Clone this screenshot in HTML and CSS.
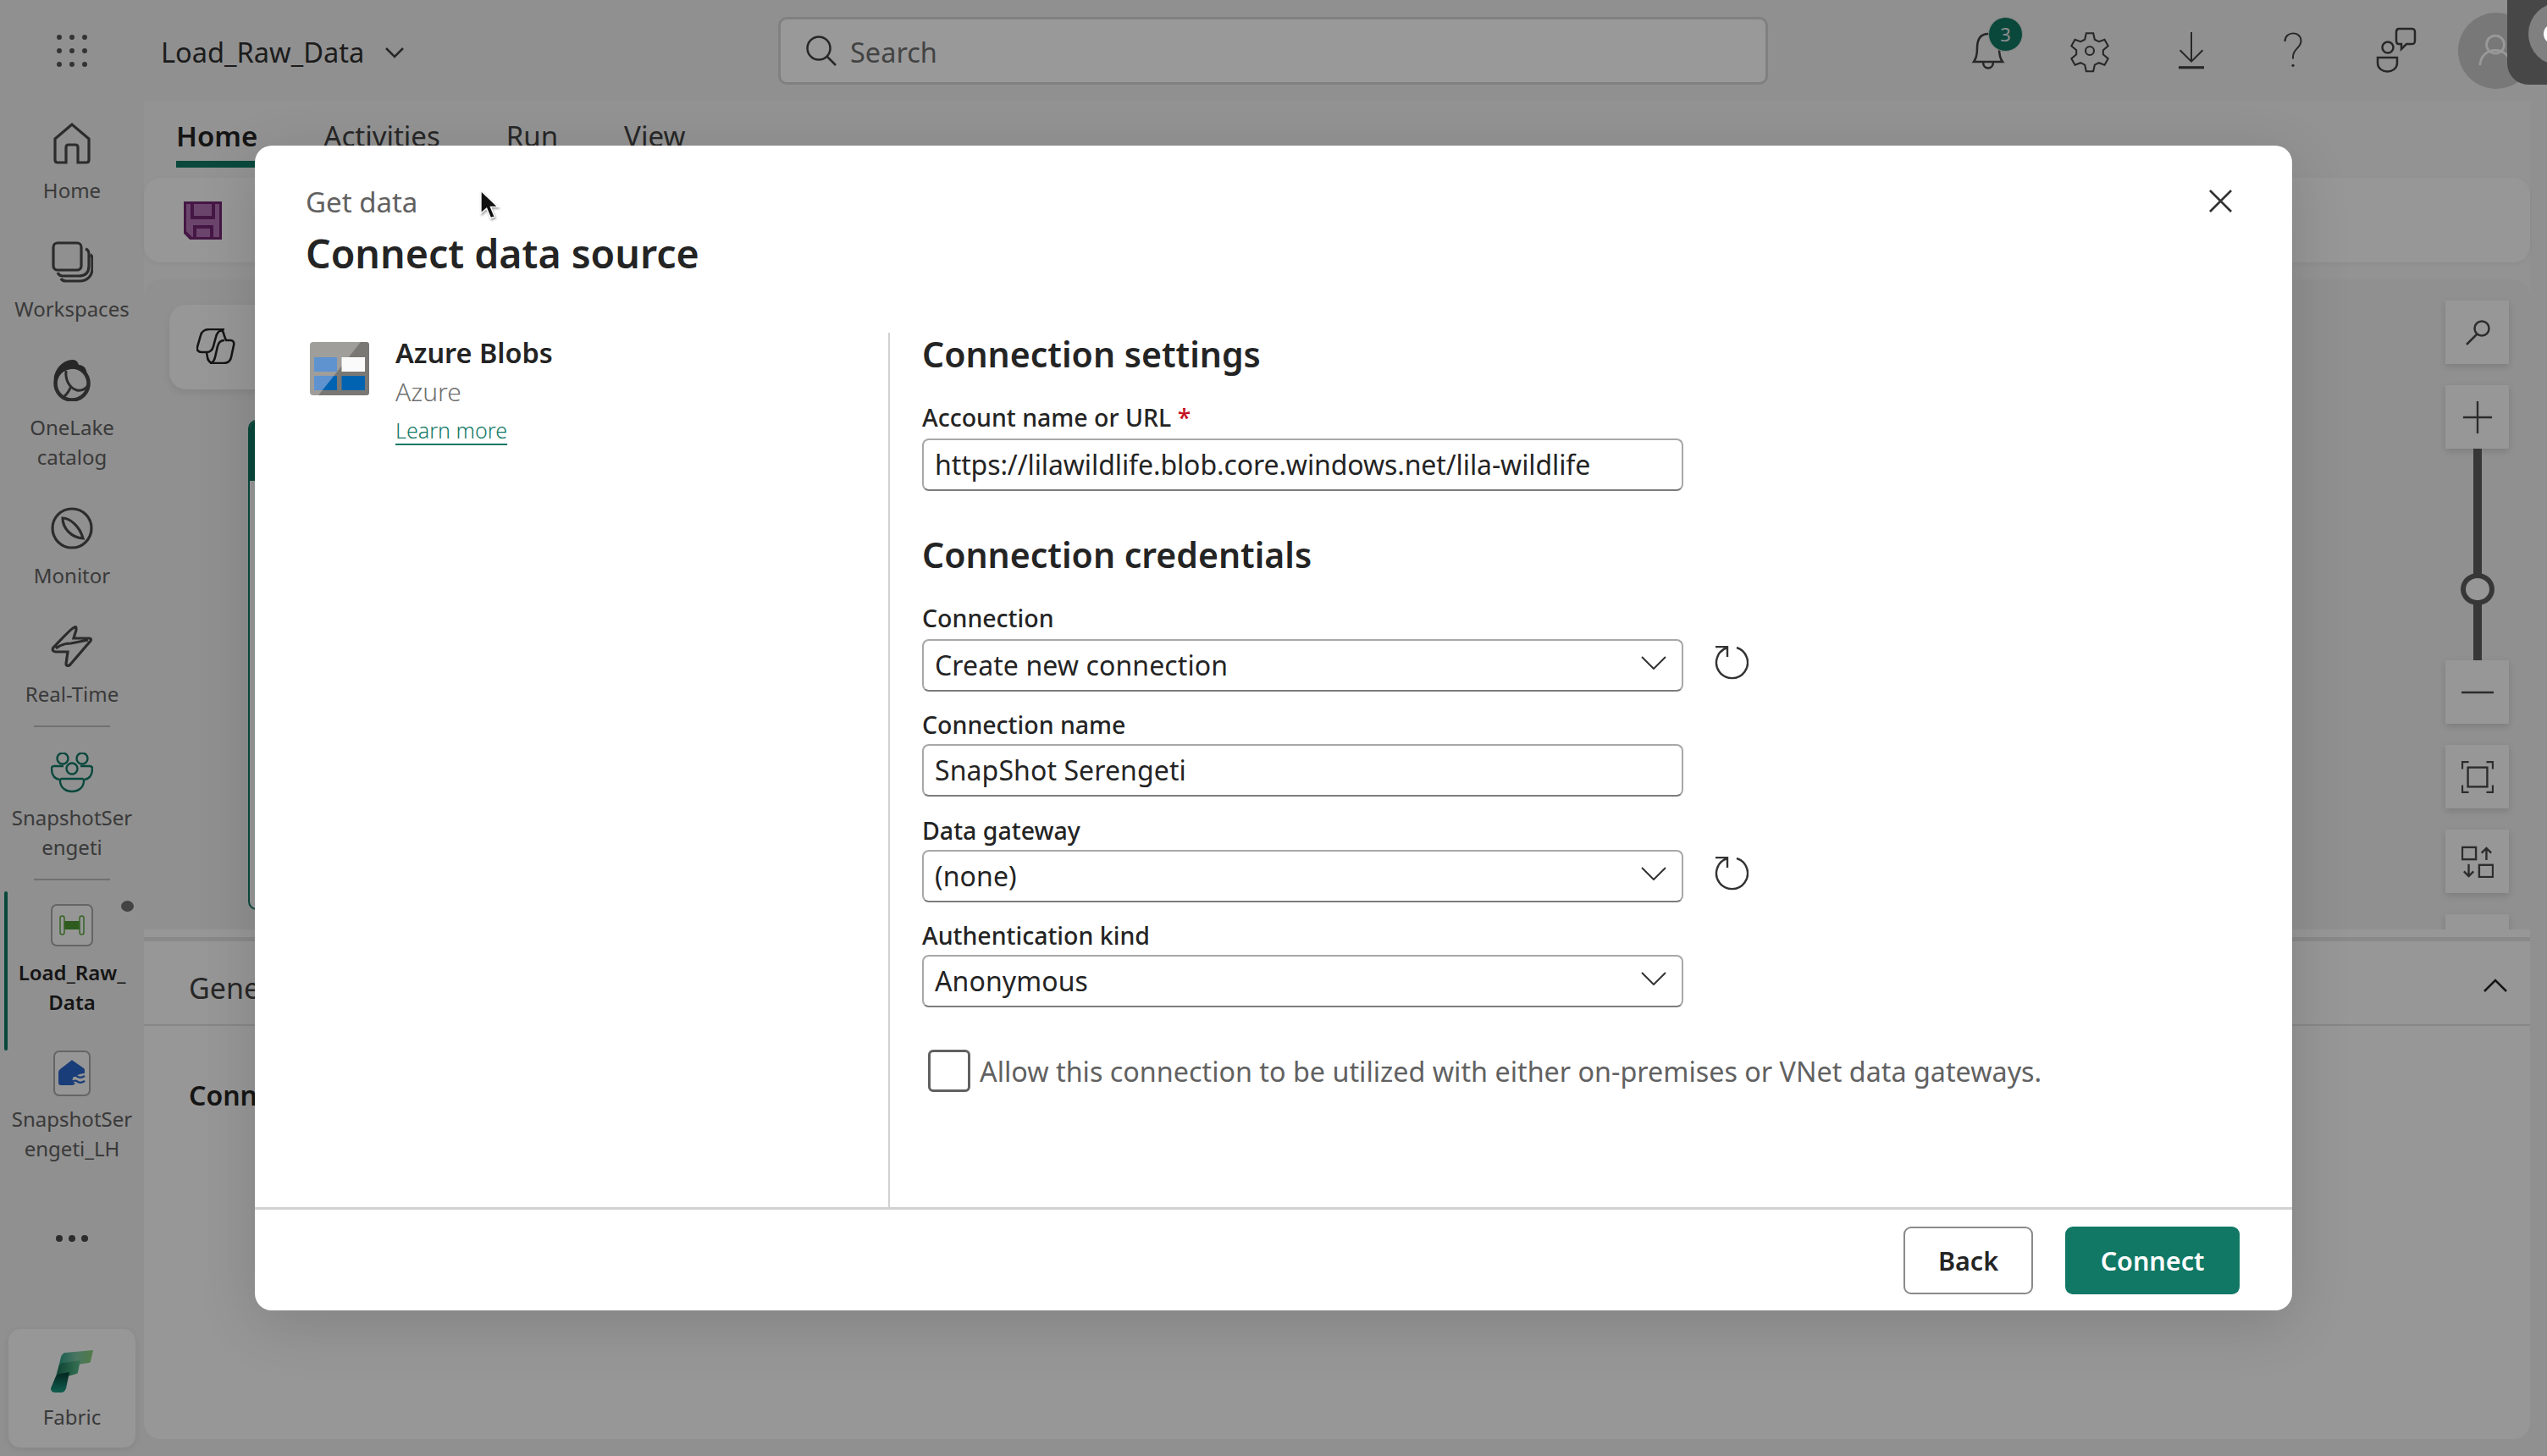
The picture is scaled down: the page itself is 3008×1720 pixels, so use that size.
FILE: index.html
```html
<!DOCTYPE html>
<html lang="en">
<head>
<meta charset="utf-8">
<title>Load_Raw_Data</title>
<link rel="stylesheet" href="styles.css">
</head>
<body>
<div class="app">
  <header class="topbar">
    <div class="waffle">
      <i></i><i></i><i></i><i></i><i></i><i></i><i></i><i></i><i></i>
    </div>
    <div class="doc-title">
      <span>Load_Raw_Data</span>
      <svg class="doc-chevron" viewBox="0 0 22 14"><path d="M1 2l10 10L21 2"/></svg>
    </div>
    <div class="search">
      <svg class="search-icon" viewBox="0 0 36 36"><circle cx="15" cy="15" r="13.5"/><path d="M25 25l10 10"/></svg>
      <span>Search</span>
    </div>
    <div class="top-actions">
      <div class="top-icon">
        <svg viewBox="0 0 60 60"><path d="M30 10c-10 0-13 8-13 17 0 8-1 12-4 16h34c-3-4-4-8-4-16 0-9-3-17-13-17zM12 43h36M24 43c0 10 12 10 12 0"/></svg>
        <span class="badge">3</span>
      </div>
      <div class="top-icon">
        <svg viewBox="-6 -6 72 72"><path d="M25 5h10l2 9 6 3 8-3 5 9-7 6v6l7 6-5 9-8-3-6 3-2 9H25l-2-9-6-3-8 3-5-9 7-6v-6l-7-6 5-9 8 3 6-3z"/><circle cx="30" cy="30" r="6"/></svg>
      </div>
      <div class="top-icon">
        <svg viewBox="-8 -8 76 76"><path d="M30 2v44M13 29l17 17 17-17"/><path class="thick" d="M11 55h38"/></svg>
      </div>
      <div class="top-icon">
        <svg viewBox="-8 -8 76 76"><path d="M18 16c0-16 24-16 24-1 0 11-12 12-12 24v3"/><circle class="solid" cx="30" cy="52" r="2"/></svg>
      </div>
      <div class="top-icon top-icon-last">
        <svg viewBox="0 0 60 60"><circle cx="22" cy="26" r="6.5"/><path d="M10 38h23v6c0 14-23 14-23 0zM35 4h15c3 0 4 1 4 4v10c0 3-1 4-4 4h-6l-6 6v-6h-3c-2 0-3-1-3-4V8c0-3 1-4 3-4z"/></svg>
      </div>
      <div class="avatar">
        <svg viewBox="0 0 60 60"><circle cx="30" cy="21" r="15"/><path d="M4 56c2-34 50-34 52 0"/></svg>
      </div>
    </div>
  </header>

  <nav class="rail">
    <a class="rail-item">
      <svg class="rail-icon" viewBox="0 0 50 50"><path d="M25 3L5 20v25c0 2 1 3 3 3h10V30c0-2 1-3 3-3h8c2 0 3 1 3 3v18h10c2 0 3-1 3-3V20z"/></svg>
      <span>Home</span>
    </a>
    <a class="rail-item">
      <svg class="rail-icon" viewBox="0 0 50 50"><rect x="3" y="3" width="33" height="32" rx="5"/><path d="M41 10c3 1 4 4 4 6v14c0 8-4 12-12 12H14c-3 0-5-2-6-4M47 17c2 1 2 4 2 6v10c0 9-6 15-15 15H18c-3 0-5-1-6-3"/></svg>
      <span>Workspaces</span>
    </a>
    <a class="rail-item">
      <svg class="rail-icon heavy" viewBox="0 0 50 50"><circle cx="25" cy="29" r="19.500"/><path class="solid" d="M26 1c-9 0-19 7-22 19-1 4 1 8 3 10 0-10 7-17 17-18 8-1 14 2 18 7 1-3 0-6-2-9-2-2-5-3-7-3-1-4-4-6-7-6z"/><path class="thin" d="M18 14c-1 10 3 20 13 23 6 1 11-2 13-6M24 32c-2 5-4 9-8 12"/></svg>
      <span>OneLake<br>catalog</span>
    </a>
    <a class="rail-item">
      <svg class="rail-icon" viewBox="0 0 50 50"><circle cx="25" cy="25" r="23"/><path d="M14 13c8 0 20 9 24 24-14-1-24-12-24-24z"/></svg>
      <span>Monitor</span>
    </a>
    <a class="rail-item">
      <svg class="rail-icon" viewBox="0 0 50 50"><path d="M28 2c-4 1-20 19-25 24-2 3 0 5 3 5h14l-2 14c0 3 3 3 5 1l24-28c1-2 0-3-2-3H27l3-10c0-3 0-4-2-3zM6 27c6-5 12-6 18-6l20-4"/></svg>
      <span>Real-Time</span>
    </a>
    <hr class="rail-divider rail-divider-first">
    <a class="rail-item rail-item-team">
      <svg class="rail-icon teal" viewBox="0 0 50 50"><circle cx="14" cy="7" r="6.5"/><circle cx="37" cy="7" r="6.5"/><circle cx="25" cy="19" r="6.5"/><path d="M15 16H4c-2 0-3 1-3 3 0 8 4 12 9 13M35 16h11c2 0 3 1 3 3 0 8-4 12-9 13M13 31h24c2 0 2 1 2 3-1 16-27 16-28 0 0-2 0-3 2-3z"/></svg>
      <span>SnapshotSer<br>engeti</span>
    </a>
    <hr class="rail-divider">
    <a class="rail-item rail-item-active">
      <span class="active-bar"></span>
      <span class="unsaved-dot"></span>
      <span class="item-box">
        <svg viewBox="0 0 30 24" class="pipeline"><rect class="pipe-core" x="6" y="7" width="18" height="10"/><rect x="1" y="1" width="5" height="22" rx="2.5"/><rect x="24" y="1" width="5" height="22" rx="2.5"/></svg>
      </span>
      <span class="bold">Load_Raw_<br>Data</span>
    </a>
    <a class="rail-item rail-item-lh">
      <span class="item-box item-box-lh">
        <svg viewBox="0 0 32 32" class="lake"><path class="lake-fill" d="M15 1L2 11c-1 1-2 2-2 4v12c0 2 1 3 3 3h13c1 0 3-1 4-2-4-2-5-7 0-9 4-2 9-3 11-3v-3c0-1 0-2-1-3L17 1c-1-1-1-1-2 0z"/><path class="lake-wave" d="M15 21c3-3 5-3 8-1s5 1 8-1M15 27c3-3 5-3 8-1s5 1 8-1"/></svg>
      </span>
      <span>SnapshotSer<br>engeti_LH</span>
    </a>
    <div class="rail-more"><i></i><i></i><i></i></div>
    <a class="fabric-card">
      <svg viewBox="0 0 50 50" class="fabric-logo">
        <defs>
          <linearGradient id="fa" x1="0" y1="0" x2="1" y2="0"><stop offset="0" stop-color="#2a9d83"/><stop offset=".5" stop-color="#7bc4a4"/><stop offset="1" stop-color="#86cc76"/></linearGradient>
          <linearGradient id="fb" x1="0" y1="0" x2="1" y2="0"><stop offset="0" stop-color="#116a54"/><stop offset="1" stop-color="#5dbf8c"/></linearGradient>
          <linearGradient id="fc" x1="0" y1="0" x2="0" y2="1"><stop offset="0" stop-color="#063d33"/><stop offset="1" stop-color="#1a9d84"/></linearGradient>
        </defs>
        <path fill="url(#fa)" d="M17 3L50 0l-3 13c0 1-1 2-2 2L9 20l3-12c1-3 3-5 5-5z"/>
        <path fill="url(#fb)" d="M9 20c1-3 3-5 6-5l20-3-3 14c0 1-1 2-2 2L5 35z"/>
        <path fill="url(#fc)" d="M5 33c1-3 3-5 6-5l11-2-4 19c-1 3-3 5-6 5H5c-4 0-5-3-5-5z"/>
      </svg>
      <span>Fabric</span>
    </a>
  </nav>

  <main class="main">
    <div class="tabs">
      <span class="tab tab-active">Home</span>
      <span class="tab">Activities</span>
      <span class="tab">Run</span>
      <span class="tab">View</span>
    </div>
    <div class="toolbar">
      <svg class="save-icon" viewBox="0 0 45 45"><path class="save-fill" d="M1 1h43v43H9l-8-8z"/><path class="save-line" d="M1 1h43v43H9l-8-8zM10 1v18h25V1M13 44V30h20v14"/></svg>
    </div>
    <section class="canvas">
      <div class="canvas-left">
        <div class="copilot">
          <svg viewBox="0 0 46 42"><path d="M15 1h11c4 0 6 2 7 8l2 5h5c3 0 5 2 4 6l-3 14c-1 5-4 7-9 7H20c-4 0-6-2-7-7l-1-6H6c-4 0-6-3-5-6l4-14c1-4 5-7 10-7zM12 28c4 0 7-3 8-7l3-11c1-5 5-9 10-9M13 34c0 4 3 7 8 7M33 14c-4 0-7 3-8 7l-3 13c-1 4-3 7-6 7"/></svg>
        </div>
        <div class="node"><div class="node-head"></div></div>
      </div>
      <div class="canvas-tools">
        <button class="tool tool-search"><svg viewBox="0 0 30 30"><circle cx="20" cy="10" r="8.500"/><path d="M14 17L2 29"/></svg></button>
        <button class="tool tool-gap"><svg viewBox="0 0 36 40"><path d="M18 0v40M0 20h36"/></svg></button>
        <div class="slider"><span class="slider-thumb"></span></div>
        <button class="tool"><svg class="tool-minus" viewBox="0 0 38 4"><path d="M0 2h38"/></svg></button>
        <button class="tool tool-gap"><svg viewBox="0 0 40 40"><path d="M9 1H1v9M31 1h8v9M9 39H1v-9M31 39h8v-9"/><rect x="8" y="8" width="24" height="24"/></svg></button>
        <button class="tool tool-gap"><svg viewBox="0 0 40 40"><rect x="1" y="2" width="17" height="15"/><rect x="22" y="24" width="17" height="15"/><path d="M9 23v15M3 32l6 6 6-6M31 18V3M25 9l6-6 6 6"/></svg></button>
        <button class="tool tool-gap"></button>
      </div>
    </section>
    <div class="splitter"></div>
    <section class="panel">
      <div class="panel-head">
        <span class="panel-title">General</span>
        <svg class="panel-chevron" viewBox="0 0 28 16"><path d="M1 15L14 2l13 13"/></svg>
      </div>
      <div class="panel-body">Connection</div>
    </section>
  </main>
</div>

<div class="scrim"></div>

<div class="recorder"><span class="rec-ring"><i></i></span></div>

<div class="dialog">
  <header class="dialog-head">
    <div class="dialog-sub">Get data</div>
    <h1 class="dialog-title">Connect data source</h1>
    <svg class="dialog-close" viewBox="0 0 28 28"><path d="M1 1l26 26M27 1L1 27"/></svg>
  </header>
  <div class="dialog-body">
    <aside class="source">
      <svg class="source-logo" viewBox="0 0 70 63">
        <rect width="70" height="63" rx="4" fill="#a09e9b"/>
        <path d="M60 0h6c3 0 4 1 4 4v55c0 3-1 4-4 4H10z" fill="#7a7874"/>
        <rect x="5" y="18" width="27" height="17" fill="#5e93cf"/>
        <rect x="37.500" y="18" width="27.500" height="17" fill="#fafafa"/>
        <rect x="5" y="40" width="27" height="17" fill="#5e93cf"/>
        <path d="M28.300 40H32v17H14.800z" fill="#0063b1"/>
        <rect x="37.500" y="40" width="27.500" height="17" fill="#0063b1"/>
      </svg>
      <div class="source-text">
        <div class="source-name">Azure Blobs</div>
        <div class="source-kind">Azure</div>
        <a class="source-link">Learn more</a>
      </div>
    </aside>
    <form class="form">
      <h2 class="form-h">Connection settings</h2>
      <label class="lbl lbl-first">Account name or URL <em>*</em></label>
      <div class="row"><div class="field field-url">https://lilawildlife.blob.core.windows.net/lila-wildlife</div></div>
      <h2 class="form-h form-h-2">Connection credentials</h2>
      <label class="lbl lbl-conn">Connection</label>
      <div class="row">
        <div class="field field-select">Create new connection
          <svg class="sel-chevron" viewBox="0 0 30 16"><path d="M1 1l14 14L29 1"/></svg></div>
        <svg class="refresh" viewBox="0 0 40 41"><path d="M26 2A18.500 18.500 0 1 1 15 2"/><path d="M1 1h14v12"/></svg>
      </div>
      <label class="lbl">Connection name</label>
      <div class="row"><div class="field">SnapShot Serengeti</div></div>
      <label class="lbl">Data gateway</label>
      <div class="row">
        <div class="field field-select">(none)
          <svg class="sel-chevron" viewBox="0 0 30 16"><path d="M1 1l14 14L29 1"/></svg></div>
        <svg class="refresh" viewBox="0 0 40 41"><path d="M26 2A18.500 18.500 0 1 1 15 2"/><path d="M1 1h14v12"/></svg>
      </div>
      <label class="lbl">Authentication kind</label>
      <div class="row">
        <div class="field field-select">Anonymous
          <svg class="sel-chevron" viewBox="0 0 30 16"><path d="M1 1l14 14L29 1"/></svg></div>
      </div>
      <div class="check-row">
        <span class="checkbox"></span>
        <span class="check-text">Allow this connection to be utilized with either on-premises or VNet data gateways.</span>
      </div>
    </form>
  </div>
  <footer class="dialog-foot">
    <button class="btn btn-back">Back</button>
    <button class="btn btn-primary">Connect</button>
  </footer>
</div>

<svg class="cursor" viewBox="0 0 24 36"><path d="M1 1v28l7-6 5 12 5-2-5-12h9z"/></svg>
</body>
</html>
```
FILE: styles.css
```css
* { box-sizing: border-box; }
html, body { margin: 0; height: 100%; }
body {
  width: 3008px; height: 1720px; overflow: hidden; position: relative;
  font-family: "Noto Sans", "Open Sans", sans-serif; color: #242424; background: #f0f0f0;
}
svg { display: block; fill: none; stroke: #424242; stroke-width: 2.500; }
button { font: inherit; padding: 0; cursor: pointer; }

.app {
  display: grid; grid-template-columns: 170px 1fr; grid-template-rows: 120px 1fr;
  width: 3008px; height: 1720px;
}

/* Top bar */
.topbar { grid-column: 1 / 3; display: grid; grid-template-columns: 190px 729px 1169px 1fr; align-items: center; }
.waffle { display: grid; grid-template-columns: repeat(3, 5px); gap: 10px 10px; justify-content: start; padding-left: 67px; }
.waffle i { width: 6px; height: 6px; border-radius: 50%; background: #555; }
.doc-title { display: flex; align-items: center; gap: 25px; font-size: 32.600px; color: #303030; padding-top: 2px; }
.doc-chevron { width: 22px; height: 14px; margin-top: 2px; }
.search {
  height: 80px; display: flex; align-items: center; gap: 16px; padding: 2px 0 0 30px;
  background: #ffffff; border: 3px solid #d6d6d6; border-radius: 10px; font-size: 32.500px; color: #707070;
}
.search-icon { width: 36px; height: 36px; margin-top: -3px; }
.top-actions { display: flex; align-items: center; padding-left: 230px; }
.top-icon { position: relative; width: 60px; height: 60px; margin-right: 60px; }
.top-icon-last { margin-right: 45px; }
.thick { stroke-width: 4; }
.solid { fill: #424242; stroke: none; }
.thin { stroke-width: 3; }
.badge {
  position: absolute; left: 0; top: -10px; margin-left: 30px; width: 41px; height: 41px; border-radius: 50%;
  background: #117865; color: #e8e8e8; font-size: 22px; line-height: 39px; text-align: center; border: 1px solid #ddd;
}
.avatar { width: 90px; height: 90px; border-radius: 50%; background: #c8c8c8; display: flex; align-items: center; justify-content: center; }
.avatar svg { width: 42px; height: 42px; stroke: #ffffff; stroke-width: 4; margin-left: -2px; margin-top: -2px; }

/* Left rail */
.rail { display: flex; flex-direction: column; align-items: center; padding-top: 24px; font-size: 24px; line-height: 35px; color: #616161; }
.rail-item { position: relative; width: 170px; display: flex; flex-direction: column; align-items: center; text-align: center; margin-bottom: 42px; }
.rail-icon { width: 50px; height: 50px; margin-bottom: 13px; stroke-width: 3.200; stroke: #4a4a4a; flex: none; }
.rail-icon.heavy { stroke-width: 4.500; }
.rail-icon.teal { stroke: #117865; stroke-width: 2.400; margin-bottom: 9px; }
.rail-item-team { margin-bottom: 42px; }
.rail-divider { width: 90px; height: 2px; border: 0; margin: -22px 0 26px; background: #bdbdbd; flex: none; }
.rail-divider-first { margin-bottom: 30px; }
.bold { font-weight: 600; color: #242424; }
.rail-item-active { margin-top: 2px; margin-bottom: 0; padding-bottom: 40px; }
.active-bar { position: absolute; left: 5px; top: -15px; bottom: 0; width: 4px; border-radius: 3px; background: #117865; }
.unsaved-dot { position: absolute; left: 142.500px; top: -4px; width: 15px; height: 13px; border-radius: 50%; background: #707070; }
.item-box {
  width: 50px; height: 50px; margin-bottom: 13px; border: 2px solid #a8a8a8; border-radius: 7px; background: #fafafa;
  display: flex; align-items: center; justify-content: center;
}
.pipeline { width: 30px; height: 24px; stroke: #5aa83c; stroke-width: 1.500; }
.pipe-core { fill: #4c9a33; stroke: none; }
.item-box-lh { width: 44px; height: 54px; margin-bottom: 9px; }
.lake { width: 32px; height: 32px; }
.lake-fill { fill: #2a66c8; stroke: none; }
.lake-wave { stroke: #2a66c8; stroke-width: 2.400; }
.rail-item-lh { margin-top: 0; margin-bottom: 0; }
.rail-more { display: flex; gap: 7px; margin-top: 85px; }
.rail-more i { width: 8px; height: 8px; border-radius: 50%; background: #4a4a4a; }
.fabric-card {
  margin-top: auto; margin-bottom: 10px; width: 150px; height: 140px; border-radius: 14px; background: #fcfcfc;
  display: flex; flex-direction: column; align-items: center; padding-top: 25px; gap: 11px; box-shadow: 0 2px 8px rgba(0,0,0,.08);
}
.fabric-logo { width: 50px; height: 50px; stroke: none; }

/* Main */
.main { display: flex; flex-direction: column; margin: 0 20px 20px 0; background: #f5f5f5; border-radius: 0 0 20px 20px; min-height: 0; }
.tabs { height: 90px; display: flex; gap: 78px; padding-left: 38px; font-size: 33px; flex: none; }
.tab { position: relative; padding-top: 18px; color: #424242; }
.tab-active { font-weight: 600; color: #242424; }
.tab-active::after { content: ""; position: absolute; left: 0; right: 0; top: 70px; height: 8px; background: #117865; }
.toolbar { height: 100px; flex: none; background: #fcfcfc; border-radius: 20px; display: flex; align-items: center; padding-left: 47px; box-shadow: 0 2px 6px rgba(0,0,0,.05); }
.save-icon { width: 45px; height: 45px; }
.save-fill { fill: #b573b5; stroke: none; }
.save-line { stroke: #742774; stroke-width: 4; }
.canvas { margin-top: 20px; height: 768px; flex: none; display: flex; justify-content: space-between; overflow: hidden; background: #f0f0f0; border-radius: 20px 20px 0 0; }
.canvas-left { padding: 30px 0 0 30px; display: flex; flex-direction: column; }
.copilot { width: 300px; height: 100px; background: #fcfcfc; border-radius: 20px; padding: 28px 0 0 32px; box-shadow: 0 4px 10px rgba(0,0,0,.08); flex: none; }
.copilot svg { width: 46px; height: 42px; stroke: #242424; stroke-width: 2.600; }
.node { margin: 36px 0 0 93px; width: 1000px; height: 579px; border: 2px solid #117865; border-radius: 10px; background: #fff; flex: none; overflow: hidden; }
.node-head { height: 70px; background: #117865; }
.canvas-tools { width: 100px; padding-top: 25px; display: flex; flex-direction: column; align-items: flex-start; flex: none; }
.tool { width: 75px; height: 75px; flex: none; border: 0; background: #fcfcfc; display: flex; align-items: center; justify-content: center; box-shadow: 0 3px 8px rgba(0,0,0,.14); }
.tool svg { width: 38px; height: 38px; stroke: #4a4a4a; }
.tool-search svg { width: 30px; height: 30px; }
.tool-gap { margin-top: 25px; }
.tool .tool-minus { height: 4px; }
.slider { position: relative; width: 10px; height: 250px; margin-left: 33px; flex: none; background: #5c5c5c; }
.slider-thumb { position: absolute; left: -15px; top: 147px; width: 40px; height: 38px; border-radius: 50%; border: 6px solid #5c5c5c; background: #fcfcfc; }
.splitter { height: 14px; flex: none; background: #fcfcfc; border-bottom: 5px solid #e4e4e4; }
.panel { flex: 1; background: #fcfcfc; border-radius: 0 0 20px 20px; min-height: 0; }
.panel-head { height: 100px; display: flex; align-items: center; justify-content: space-between; padding: 12px 27px 0 53px; border-bottom: 2px solid #e0e0e0; font-size: 34px; color: #424242; }
.panel-chevron { width: 28px; height: 16px; stroke: #242424; margin-top: -6px; }
.panel-body { padding: 60px 53px; font-size: 32px; font-weight: 600; }

/* Scrim + overlays */
.scrim { position: absolute; inset: 0; background: rgba(0,0,0,.4); }
.recorder { position: absolute; left: 2961px; top: -30px; width: 90px; height: 130px; background: #474747; border-radius: 25px; }
.rec-ring { position: absolute; left: 25px; top: 33px; width: 74px; height: 74px; border-radius: 50%; background: #808080; }
.rec-ring i { position: absolute; left: 18px; top: 25px; width: 24px; height: 24px; border-radius: 50%; background: #fff; }
.cursor { position: absolute; left: 567px; top: 224px; width: 23px; height: 35px; fill: #111; stroke: #fff; stroke-width: 1.500; filter: drop-shadow(1px 2px 1px rgba(0,0,0,.35)); }

/* Dialog */
.dialog {
  position: absolute; left: 301px; top: 172px; width: 2406px; height: 1376px; background: #fff; border-radius: 20px;
  display: flex; flex-direction: column; box-shadow: 0 16px 70px rgba(0,0,0,.14);
}
.dialog-head { position: relative; height: 221px; padding: 44px 0 0 60px; flex: none; }
.dialog-sub { font-size: 33px; line-height: 45px; color: #616161; }
.dialog-title { margin: 7px 0 0; font-size: 46.500px; line-height: 62px; font-weight: 600; color: #242424; }
.dialog-close { position: absolute; right: 71px; top: 52px; width: 27px; height: 27px; stroke-width: 2.800; stroke: #333; }
.dialog-body { flex: 1; display: flex; min-height: 0; }
.source { width: 750px; flex: none; padding: 11px 0 0 65px; display: flex; gap: 31px; border-right: 2px solid #d1d1d1; }
.source-logo { width: 70px; height: 63px; stroke: none; flex: none; }
.source-text { display: flex; flex-direction: column; }
.source-name { font-size: 32.400px; line-height: 46px; font-weight: 600; color: #242424; margin-top: -11px; }
.source-kind { font-size: 30px; line-height: 47px; font-weight: 300; color: #707070; }
.source-link { font-size: 25.100px; line-height: 44px; font-weight: 300; color: #117865; text-decoration: underline; text-underline-offset: 6px; }
.form { flex: 1; padding-left: 38px; }
.form-h { margin: 0; font-size: 41px; line-height: 50px; font-weight: 600; color: #242424; }
.form-h-2 { margin-top: 50px; }
.lbl { display: block; font-size: 28.500px; line-height: 40px; font-weight: 500; color: #242424; margin: 19.500px 0 3px; }
.lbl em { font-style: normal; color: #c50f1f; }
.lbl-first { margin: 30px 0 5px; }
.lbl-conn { margin: 30px 0 4.500px; }
.row { display: flex; align-items: center; gap: 37px; }
.field {
  position: relative; width: 899px; height: 62px; padding-left: 13px; font-size: 32px; line-height: 57px; color: #242424; letter-spacing: .1px;
  border: 2px solid #a8a8a8; border-bottom-color: #7c7c7c; border-radius: 8px; background: #fff; display: block;
}
.field-url { letter-spacing: -.1px; }
.sel-chevron { position: absolute; right: 18px; top: 18px; width: 30px; height: 16px; stroke: #333; stroke-width: 2; }
.refresh { width: 40px; height: 41px; stroke: #333; stroke-width: 2.400; margin-top: -4px; flex: none; }
.check-row { display: flex; align-items: center; gap: 11px; margin: 50px 0 0 7px; }
.checkbox { width: 50px; height: 50px; border: 3px solid #616161; border-radius: 6px; flex: none; }
.check-text { font-size: 32.300px; color: #616161; }
.dialog-foot { height: 122px; flex: none; display: flex; justify-content: flex-end; gap: 38px; padding: 20px 62px 0 0; border-top: 3px solid #d1d1d1; }
.btn { height: 80px; border-radius: 9px; font-size: 30.500px; font-weight: 600; }
.btn-back { width: 153px; background: #fff; border: 2px solid #8a8a8a; color: #242424; }
.btn-primary { width: 206px; background: #117865; border: 0; color: #fff; }
```
